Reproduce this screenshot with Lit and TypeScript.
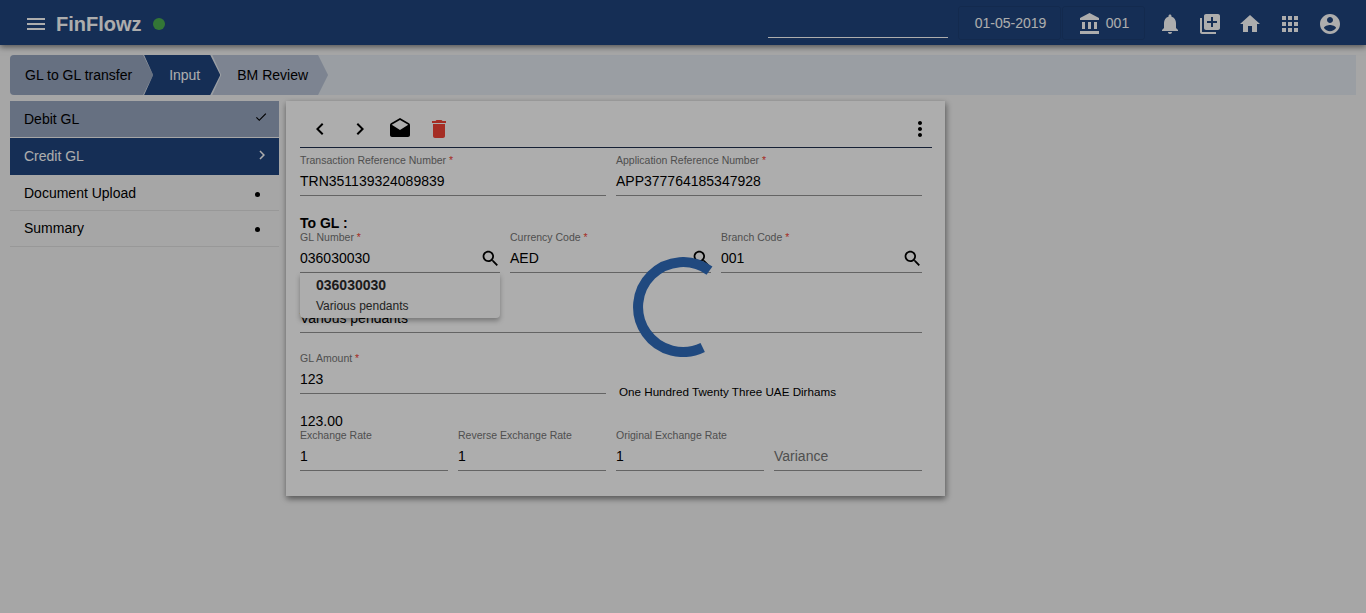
import { LitElement, html, css, svg } from "lit";
import { customElement } from "lit/decorators.js";

const P: Record<string, string> = {
  menu: "M3 18h18v-2H3v2zm0-5h18v-2H3v2zm0-7v2h18V6H3z",
  bell: "M12 22c1.1 0 2-.9 2-2h-4c0 1.1.89 2 2 2zm6-6v-5c0-3.07-1.64-5.64-4.5-6.32V4c0-.83-.67-1.5-1.5-1.5s-1.5.67-1.5 1.5v.68C7.63 5.36 6 7.92 6 11v5l-2 2v1h16v-1l-2-2z",
  add: "M4 6H2v14c0 1.1.9 2 2 2h14v-2H4V6zm16-4H8c-1.1 0-2 .9-2 2v12c0 1.1.9 2 2 2h12c1.1 0 2-.9 2-2V4c0-1.1-.9-2-2-2zm-1 9h-4v4h-2v-4H9V9h4V5h2v4h4v2z",
  home: "M10 20v-6h4v6h5v-8h3L12 3 2 12h3v8z",
  apps: "M4 8h4V4H4v4zm6 12h4v-4h-4v4zm-6 0h4v-4H4v4zm0-6h4v-4H4v4zm6 0h4v-4h-4v4zm6-10v4h4V4h-4zm-6 4h4V4h-4v4zm6 6h4v-4h-4v4zm0 6h4v-4h-4v4z",
  user: "M12 2C6.48 2 2 6.48 2 12s4.48 10 10 10 10-4.48 10-10S17.52 2 12 2zm0 3c1.66 0 3 1.34 3 3s-1.34 3-3 3-3-1.34-3-3 1.34-3 3-3zm0 14.2c-2.5 0-4.71-1.28-6-3.22.03-1.99 4-3.08 6-3.08 1.99 0 5.97 1.09 6 3.08-1.29 1.94-3.5 3.22-6 3.22z",
  bank: "M4 10v7h3v-7H4zm6 0v7h3v-7h-3zM2 22h19v-3H2v3zm14-12v7h3v-7h-3zm-4.5-9L2 6v2h19V6l-9.5-5z",
  search: "M15.5 14h-.79l-.28-.27C15.41 12.59 16 11.11 16 9.5 16 5.91 13.09 3 9.5 3S3 5.91 3 9.5 5.91 16 9.5 16c1.61 0 3.09-.59 4.23-1.57l.27.28v.79l5 4.99L20.49 19l-4.99-5zm-6 0C7.01 14 5 11.99 5 9.5S7.01 5 9.5 5 14 7.01 14 9.5 11.99 14 9.5 14z",
  left: "M15.41 7.41L14 6l-6 6 6 6 1.41-1.41L10.83 12z",
  right: "M10 6L8.59 7.41 13.17 12l-4.58 4.59L10 18l6-6z",
  drafts: "M21.99 8c0-.72-.37-1.35-.94-1.7L12 1 2.95 6.3C2.38 6.65 2 7.28 2 8v10c0 1.1.9 2 2 2h16c1.1 0 2-.9 2-2l-.01-10zM12 13L3.74 7.84 12 3l8.26 4.84L12 13z",
  del: "M6 19c0 1.1.9 2 2 2h8c1.1 0 2-.9 2-2V7H6v12zM19 4h-3.5l-1-1h-5l-1 1H5v2h14V4z",
  more: "M12 8c1.1 0 2-.9 2-2s-.9-2-2-2-2 .9-2 2 .9 2 2 2zm0 2c-1.1 0-2 .9-2 2s.9 2 2 2 2-.9 2-2-.9-2-2-2zm0 6c-1.1 0-2 .9-2 2s.9 2 2 2 2-.9 2-2-.9-2-2-2z",
  check: "M9 16.17L4.83 12l-1.42 1.41L9 19 21 7l-1.41-1.41z",
};

const icon = (n: string, cls = "") => html`<svg class="ic ${cls}" viewBox="0 0 24 24"><path d=${P[n]}></path></svg>`;

const field = (label: string, value: string, opts: { req?: boolean; search?: boolean; ph?: boolean } = {}) => html`
  <div class="field">
    <div class="label">${label}${opts.req ? html` <span class="req">*</span>` : ""}</div>
    <div class="value ${opts.ph ? "ph" : ""}"><span class="txt">${value}</span>${opts.search ? icon("search", "srch") : ""}</div>
  </div>`;

@customElement("app-root")
export class AppRoot extends LitElement {
  static styles = css`
    :host { display: block; min-height: 613px; background: #f5f5f5; font-family: "Liberation Sans", Arial, sans-serif; font-size: 14px; color: #000; position: relative; overflow: hidden; height: 613px; }
    * { box-sizing: border-box; }
    .ic { display: block; width: 24px; height: 24px; fill: currentColor; flex: none; }
    header { height: 45px; background: #20457e; color: #fff; display: flex; align-items: center; padding: 3px 0 0 24px; box-shadow: 0 2px 6px rgba(0,0,0,.5); position: relative; }
    .brand { font-size: 20px; font-weight: 700; margin-left: 8px; }
    .dot { width: 12px; height: 12px; border-radius: 50%; background: #4caf50; margin-left: 11px; }
    .spacer { flex: 1; }
    .hsearch { align-self: flex-start; width: 180px; height: 35px; border-bottom: 1px solid #fff; margin-right: 10px; }
    .hbox { height: 34px; margin-bottom: 2px; border: 1px solid #1d3f74; border-radius: 3px; display: flex; align-items: center; justify-content: center; }
    .date { width: 103px; padding-left: 2px; }
    .branch { width: 83px; margin-left: 1px; gap: 4px; }
    .branch .ic { margin-top: 1px; }
    .hicons { display: flex; margin-left: 5px; margin-right: 16px; }
    .hicons span { width: 40px; display: flex; justify-content: center; }
    .crumbs { margin: 10px 10px 0; height: 40px; background: #e3e9f1; display: flex; border-radius: 4px 0 0 4px; }
    .step { height: 40px; display: flex; align-items: center; padding: 0 20px 0 25px; margin-left: -8px; clip-path: polygon(0 0, calc(100% - 10px) 0, 100% 50%, calc(100% - 10px) 100%, 0 100%, 9px 50%); }
    .s1 { background: #97a5bf; padding-left: 15px; margin-left: 0; padding-right: 21px; clip-path: polygon(0 0, calc(100% - 10px) 0, 100% 50%, calc(100% - 10px) 100%, 0 100%); border-radius: 4px 0 0 4px; }
    .s2 { background: #20457e; color: #fff; margin-left: -9px; }
    .s3 { background: #b9c3d6; }
    .main { display: flex; margin: 6px 0 0 10px; align-items: flex-start; }
    .side { width: 269px; margin-right: 7px; }
    .item { display: flex; justify-content: space-between; align-items: center; padding-left: 14px; }
    .i1 { height: 36px; background: #97a5bf; margin-bottom: 1px; }
    .i2 { height: 37px; background: #20457e; color: #fff; padding-bottom: 2px; }
    .i3 { height: 36px; border-bottom: 1px solid #e0e0e0; }
    .i4 { height: 36px; border-bottom: 1px solid #e0e0e0; padding-bottom: 2px; }
    .mark { width: 14px; height: 14px; margin-right: 11px; margin-top: -4px; }
    .chev { width: 18px; height: 18px; margin-right: 8px; margin-top: -1px; }
    .bullet { width: 5px; height: 5px; background: #000; border-radius: 50%; margin-right: 19px; margin-top: 3px; }
    .card { width: 659px; height: 395px; background: #fff; padding: 0 13px 25px 14px; box-shadow: 0 3px 6px rgba(0,0,0,.35), 2px 2px 6px rgba(0,0,0,.2); position: relative; }
    .tools { height: 47px; border-bottom: 1px solid #20304f; display: flex; align-items: center; padding-top: 9px; }
    .tools button { width: 40px; height: 40px; padding: 0; border: 0; background: none; display: flex; align-items: center; justify-content: center; color: #000; }
    .tools button.red { color: #f44336; width: 38px; }
    .tools button.kebab { margin-right: -8px; }
    .form { width: 622px; padding-top: 6px; }
    .row { display: flex; gap: 10px; }
    .r3 { display: grid; grid-template-columns: 200px 201px 201px; gap: 10px; }
    .field { flex: 1 1 0; min-width: 0; height: 42px; border-bottom: 1px solid #949494; }
    .label { font-size: 10.5px; line-height: 12px; min-height: 12px; color: #757575; white-space: nowrap; }
    .req { color: #f44336; }
    .value { display: flex; align-items: center; justify-content: space-between; height: 18px; margin-top: 6px; line-height: 18px; color: #000; }
    .value.ph { color: #757575; }
    .srch { width: 21px; height: 21px; margin-right: -1px; }
    .togl { font-weight: 700; font-size: 14px; line-height: 16px; margin-top: 19px; }
    .m18 { margin-top: 18px; }
    .m19 { margin-top: 19px; }
    .words { flex: 1 1 0; min-width: 0; align-self: flex-end; font-size: 11.65px; line-height: 14px; text-indent: 3px; margin-bottom: -5px; white-space: nowrap; }
    .amount { line-height: 16px; margin-top: 19px; }
    .pop { position: absolute; left: 14px; top: 172px; width: 200px; height: 45px; background: #fff; border-radius: 0 0 4px 4px; box-shadow: 0 3px 5px rgba(0,0,0,.3); padding: 4px 16px; }
    .pop b { display: block; font-size: 14px; line-height: 16px; color: #2a2a2a; }
    .pop span { display: block; font-size: 12px; line-height: 14px; margin-top: 6px; color: #333; }
    .overlay { position: absolute; inset: 0; background: rgba(0,0,0,.32); }
    .spin { position: absolute; left: 633px; top: 257px; width: 100px; height: 100px; fill: none; stroke: #20497f; stroke-width: 10; }
  `;

  render() {
    return html`
      <header>
        ${icon("menu")}
        <span class="brand">FinFlowz</span><span class="dot"></span>
        <span class="spacer"></span>
        <div class="hsearch"></div>
        <div class="hbox date">01-05-2019</div>
        <div class="hbox branch">${icon("bank")}<span>001</span></div>
        <div class="hicons">
          ${["bell", "add", "home", "apps", "user"].map((n) => html`<span>${icon(n)}</span>`)}
        </div>
      </header>
      <nav class="crumbs">
        <div class="step s1">GL to GL transfer</div>
        <div class="step s2">Input</div>
        <div class="step s3">BM Review</div>
      </nav>
      <div class="main">
        <aside class="side">
          <div class="item i1">Debit GL ${icon("check", "mark")}</div>
          <div class="item i2">Credit GL ${icon("right", "chev")}</div>
          <div class="item i3">Document Upload <span class="bullet"></span></div>
          <div class="item i4">Summary <span class="bullet"></span></div>
        </aside>
        <section class="card">
          <div class="tools">
            <button>${icon("left")}</button>
            <button>${icon("right")}</button>
            <button>${icon("drafts")}</button>
            <button class="red">${icon("del")}</button>
            <span class="spacer"></span>
            <button class="kebab">${icon("more")}</button>
          </div>
          <div class="form">
            <div class="row">
              ${field("Transaction Reference Number", "TRN351139324089839", { req: true })}
              ${field("Application Reference Number", "APP377764185347928", { req: true })}
            </div>
            <div class="togl">To GL :</div>
            <div class="r3">
              ${field("GL Number", "036030030", { req: true, search: true })}
              ${field("Currency Code", "AED", { req: true, search: true })}
              ${field("Branch Code", "001", { req: true, search: true })}
            </div>
            <div class="row m18">${field("", "Various pendants")}</div>
            <div class="row m19">
              ${field("GL Amount", "123", { req: true })}
              <div class="words">One Hundred Twenty Three UAE Dirhams</div>
            </div>
            <div class="amount">123.00</div>
            <div class="row">
              ${field("Exchange Rate", "1")}
              ${field("Reverse Exchange Rate", "1")}
              ${field("Original Exchange Rate", "1")}
              ${field("", "Variance", { ph: true })}
            </div>
          </div>
          <div class="pop"><b>036030030</b><span>Various pendants</span></div>
        </section>
      </div>
      <div class="overlay"></div>
      <svg class="spin" viewBox="0 0 100 100">${svg`<path d="M76.5 13.6 A45 45 0 1 0 69.7 90.5"></path>`}</svg>
    `;
  }
}
